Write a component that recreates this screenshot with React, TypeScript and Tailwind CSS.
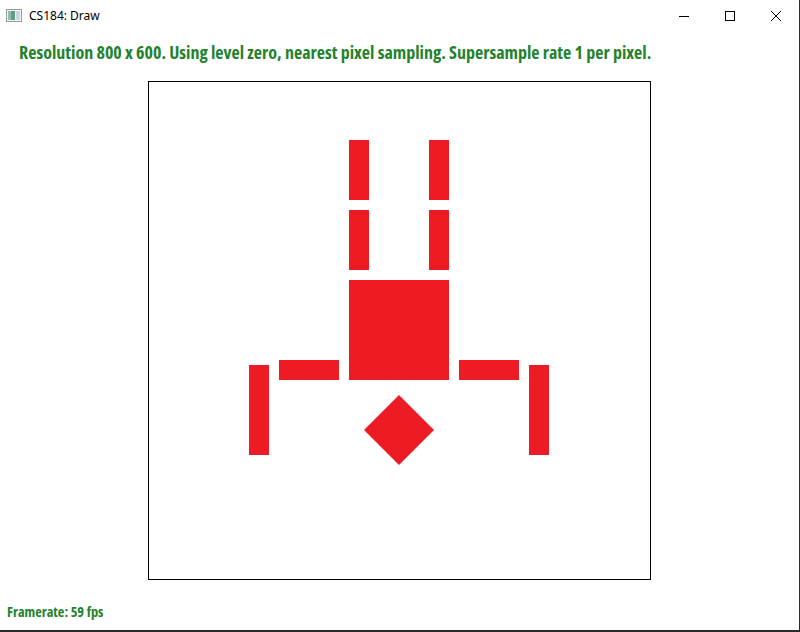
import React from "react";

export default function App() {
  const red = "#ed1c24";
  const rects = [
    [349, 140, 20, 60],
    [429, 140, 20, 60],
    [349, 210, 20, 60],
    [429, 210, 20, 60],
    [349, 280, 100, 100],
    [279, 360, 60, 20],
    [459, 360, 60, 20],
    [249, 365, 20, 90],
    [529, 365, 20, 90],
  ];
  return (
    <div className="w-[800px] h-[632px] bg-white flex flex-col border-r border-b-2 border-[#2b2b2b] overflow-hidden">
      <div className="h-[31px] flex items-center shrink-0 font-['Noto_Sans',sans-serif] text-[12px] text-black">
        <svg width="16" height="13" viewBox="0 0 16 13" className="ml-[6px]">
          <rect x="0.5" y="0.5" width="15" height="12" fill="#f3f3f3" stroke="#9a9a9a" />
          <rect x="2" y="2" width="7" height="9" fill="#5c9a8a" />
          <rect x="2" y="2" width="3" height="9" fill="#8fbfae" />
          <rect x="10" y="2" width="4" height="9" fill="#c9d6e0" />
        </svg>
        <span className="ml-[7px]">CS184: Draw</span>
        <div className="ml-auto flex h-full">
          <div className="w-[46px] h-full flex items-center justify-center">
            <svg width="10" height="10" viewBox="0 0 10 10"><line x1="0" y1="5.5" x2="10" y2="5.5" stroke="#000" strokeWidth="1" /></svg>
          </div>
          <div className="w-[46px] h-full flex items-center justify-center">
            <svg width="10" height="10" viewBox="0 0 10 10"><rect x="0.5" y="0.5" width="9" height="9" fill="none" stroke="#000" strokeWidth="1" /></svg>
          </div>
          <div className="w-[46px] h-full flex items-center justify-center">
            <svg width="10" height="10" viewBox="0 0 10 10"><path d="M0 0L10 10M10 0L0 10" stroke="#000" strokeWidth="1" /></svg>
          </div>
        </div>
      </div>
      <div className="flex-1 flex flex-col relative font-['Open_Sans',sans-serif] font-bold text-[#23822b]">
        <div className="pl-[19px] pt-[9px] text-[18px] leading-[25px] font-stretch-[75%] whitespace-nowrap">
          Resolution 800 x 600. Using level zero, nearest pixel sampling. Supersample rate 1 per pixel.
        </div>
        <div className="ml-[148px] mt-[16px] w-[503px] h-[499px] border border-black">
          <svg width="501" height="497" viewBox="149 82 501 497" className="block">
            {rects.map(([x, y, w, h], i) => (
              <rect key={i} x={x} y={y} width={w} height={h} fill={red} />
            ))}
            <polygon points="399,395 434,430 399,465 364,430" fill={red} />
          </svg>
        </div>
        <div className="pl-[7px] mt-auto mb-[9px] text-[14.3px] leading-[18px] font-stretch-[75%]">
          Framerate: 59 fps
        </div>
      </div>
    </div>
  );
}
